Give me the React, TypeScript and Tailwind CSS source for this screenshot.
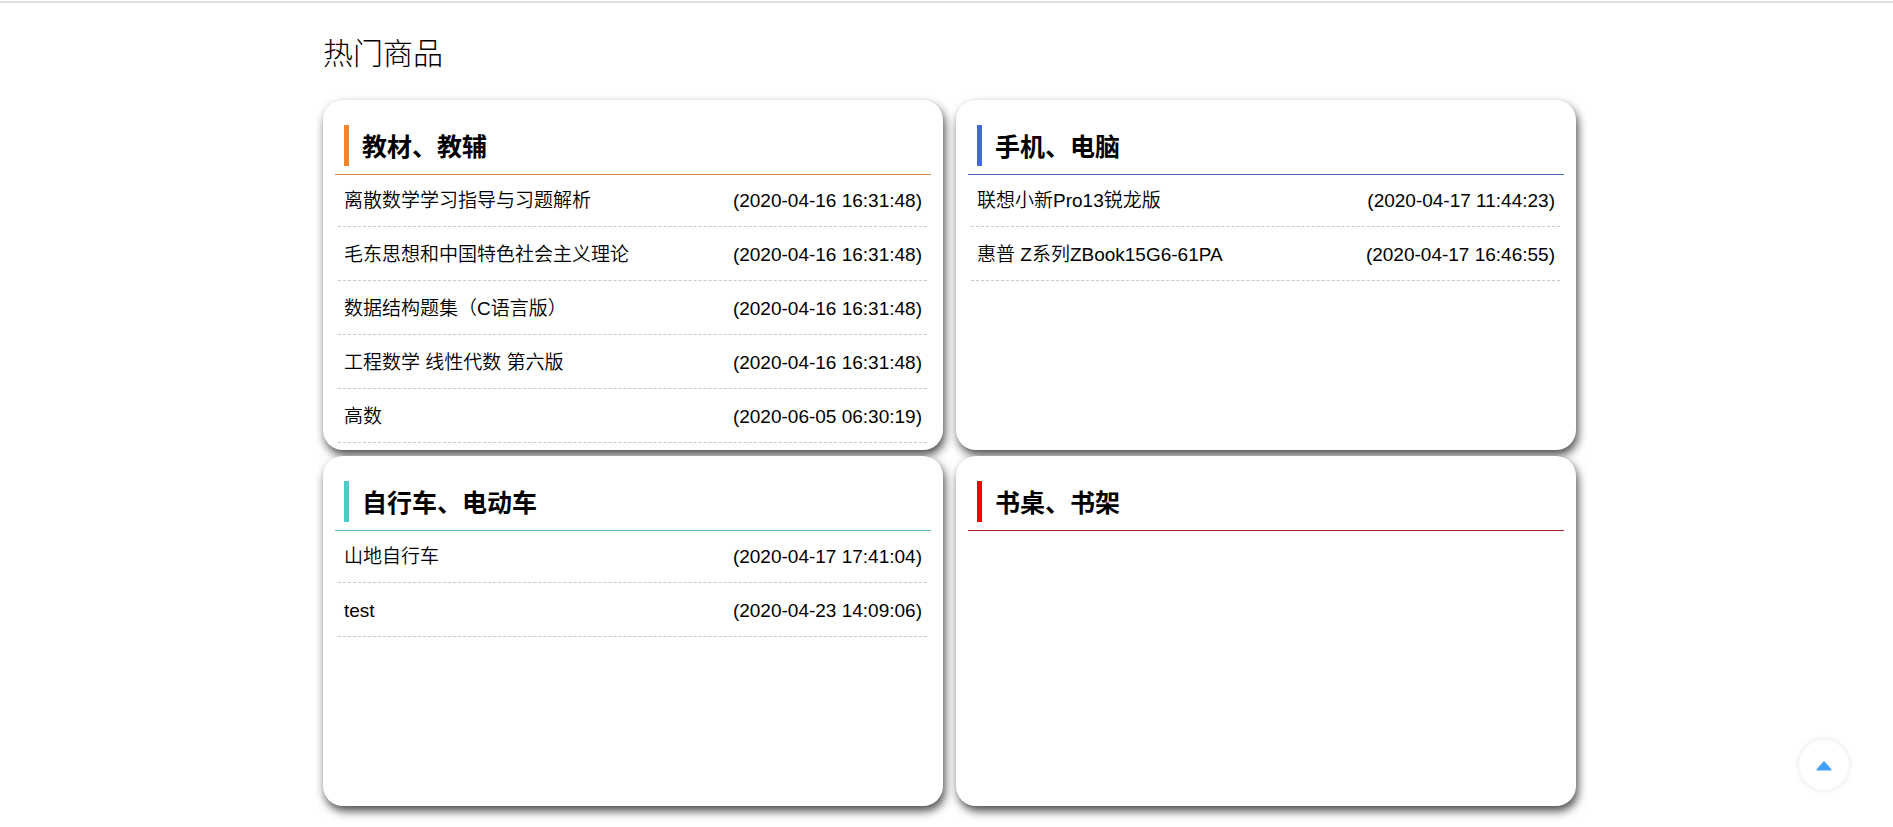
type Item = { name: string; time: string };
type Category = { title: string; bar: string; line: string; items: Item[] };

const categories: Category[] = [
  {
    title: "教材、教辅",
    bar: "border-[#f5842f]",
    line: "border-[#dc8743]",
    items: [
      { name: "离散数学学习指导与习题解析", time: "2020-04-16 16:31:48" },
      { name: "毛东思想和中国特色社会主义理论", time: "2020-04-16 16:31:48" },
      { name: "数据结构题集（C语言版）", time: "2020-04-16 16:31:48" },
      { name: "工程数学 线性代数 第六版", time: "2020-04-16 16:31:48" },
      { name: "高数", time: "2020-06-05 06:30:19" },
    ],
  },
  {
    title: "手机、电脑",
    bar: "border-[#4369dc]",
    line: "border-[#4a66b8]",
    items: [
      { name: "联想小新Pro13锐龙版", time: "2020-04-17 11:44:23" },
      { name: "惠普 Z系列ZBook15G6-61PA", time: "2020-04-17 16:46:55" },
    ],
  },
  {
    title: "自行车、电动车",
    bar: "border-[#4bcdc6]",
    line: "border-[#62bcc4]",
    items: [
      { name: "山地自行车", time: "2020-04-17 17:41:04" },
      { name: "test", time: "2020-04-23 14:09:06" },
    ],
  },
  {
    title: "书桌、书架",
    bar: "border-[#f50000]",
    line: "border-[#b3202a]",
    items: [],
  },
];

function CategoryCard({ title, bar, line, items }: Category) {
  return (
    <section className="h-[350px] rounded-[20px] bg-white px-3 pt-[25px] shadow-[2px_5px_10px_#4c4c4c]">
      <header className={`border-b pb-2 pl-[9px] ${line}`}>
        <h2 className={`border-l-5 pl-[13px] pt-[3px] text-[25px] leading-[38px] font-bold ${bar}`}>{title}</h2>
      </header>
      <ul className="-mt-0.5 pl-[3px] pr-1">
        {items.map((item) => (
          <li key={item.name} className="border-b border-dashed border-[#c8c8c8]">
            <a href="#" className="flex h-[53px] items-center justify-between pt-1 pl-1.5 pr-[5px] text-[19px]">
              <span className="font-[350]">{item.name}</span>
              <time>({item.time})</time>
            </a>
          </li>
        ))}
      </ul>
    </section>
  );
}

export default function App() {
  return (
    <div className="border-t border-white bg-white font-['Liberation_Sans','Noto_Sans_CJK_SC',sans-serif] text-black">
      <main className="border-t-2 border-[#dce0e0] pb-5">
        <div className="mx-auto max-w-[1259px] pl-1.5">
          <h1 className="pt-7 pb-6 text-[30px] leading-[45px] font-light">热门商品</h1>
          <div className="grid grid-cols-2 gap-x-[13px] gap-y-1.5">
            {categories.map((category) => (
              <CategoryCard key={category.title} {...category} />
            ))}
          </div>
        </div>
      </main>
      <button
        type="button"
        aria-label="返回顶部"
        className="fixed right-11 bottom-[37px] flex size-[50px] items-center justify-center rounded-full bg-white shadow-[0_0_6px_rgba(0,0,0,0.12)]"
      >
        <svg className="size-4" viewBox="0 0 16 16" fill="#409eff" aria-hidden="true">
          <path d="M8 4 L15.6 12.6 Q15.8 13.4 15 13.4 H1 Q0.2 13.4 0.4 12.6 Z" />
        </svg>
      </button>
    </div>
  );
}
